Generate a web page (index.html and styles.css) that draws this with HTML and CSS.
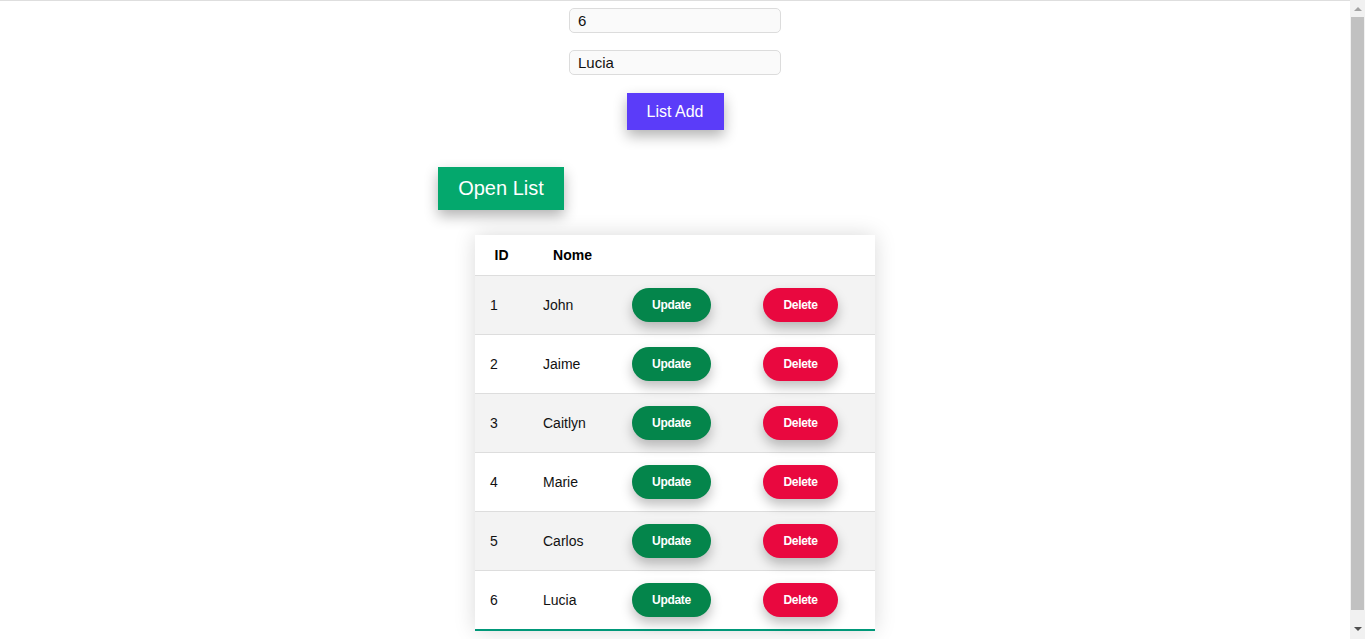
FILE: index.html
```html
<!DOCTYPE html>
<html lang="en">
<head>
<meta charset="utf-8">
<title>List</title>
<link rel="stylesheet" href="styles.css">
</head>
<body>
<div class="form">
  <input class="field" type="text" value="6">
  <input class="field" type="text" value="Lucia">
  <button class="btn-add">List Add</button>
</div>
<div class="list-wrap">
  <button class="btn-open">Open List</button>
  <table class="list">
    <thead>
      <tr><th>ID</th><th>Nome</th><th></th><th></th></tr>
    </thead>
    <tbody>
      <tr><td>1</td><td>John</td><td><button class="pill upd">Update</button></td><td><button class="pill del">Delete</button></td></tr>
      <tr><td>2</td><td>Jaime</td><td><button class="pill upd">Update</button></td><td><button class="pill del">Delete</button></td></tr>
      <tr><td>3</td><td>Caitlyn</td><td><button class="pill upd">Update</button></td><td><button class="pill del">Delete</button></td></tr>
      <tr><td>4</td><td>Marie</td><td><button class="pill upd">Update</button></td><td><button class="pill del">Delete</button></td></tr>
      <tr><td>5</td><td>Carlos</td><td><button class="pill upd">Update</button></td><td><button class="pill del">Delete</button></td></tr>
      <tr><td>6</td><td>Lucia</td><td><button class="pill upd">Update</button></td><td><button class="pill del">Delete</button></td></tr>
    </tbody>
  </table>
</div>
<div class="scrollbar" aria-hidden="true">
  <div class="sb-arrow sb-up"></div>
  <div class="sb-thumb"></div>
  <div class="sb-arrow sb-down"></div>
</div>
</body>
</html>
```
FILE: styles.css
```css
html {
  border-top: 1px solid #dedede;
}
body {
  margin: 7px 23px 8px 8px;
  font-family: "Liberation Sans", Arial, sans-serif;
  color: #111;
  background: #fff;
}
.form {
  display: flex;
  flex-direction: column;
  align-items: center;
}
.field {
  box-sizing: border-box;
  width: 212px;
  height: 25px;
  margin: 0 0 17px;
  padding: 0 8px;
  border: 1px solid #dcdcdc;
  border-radius: 5px;
  background: #fafafa;
  font-family: "Liberation Sans", Arial, sans-serif;
  font-size: 15px;
  color: #111;
}
.btn-add {
  margin-top: 1px;
  width: 97px;
  height: 37px;
  border: none;
  background: #5b3cf9;
  color: #fff;
  font-family: "Liberation Sans", Arial, sans-serif;
  font-size: 16px;
  box-shadow: 0 6px 14px rgba(0, 0, 0, 0.3);
  cursor: pointer;
}
.list-wrap {
  width: 474px;
  margin: 37px auto 16px;
  display: flex;
  flex-direction: column;
}
.btn-open {
  align-self: flex-start;
  width: 126px;
  height: 43px;
  border: none;
  background: #04a86d;
  color: #fff;
  font-family: "Liberation Sans", Arial, sans-serif;
  font-size: 20px;
  box-shadow: 0 6px 14px rgba(0, 0, 0, 0.3);
}
.list {
  align-self: center;
  margin-top: 25px;
  width: 400px;
  border-collapse: collapse;
  table-layout: fixed;
  font-size: 14px;
  box-shadow: 0 0 20px rgba(0, 0, 0, 0.15);
}
.list th:nth-child(1) { width: 53px; }
.list th:nth-child(2) { width: 89px; }
.list th:nth-child(3) { width: 131px; }
.list th:nth-child(4) { width: 127px; }
.list thead tr {
  background: #fff;
  height: 40px;
  border-bottom: 1px solid #dddddd;
}
.list th {
  font-weight: bold;
  text-align: center;
  padding: 0;
  color: #000;
}
.list tbody tr {
  height: 59px;
  border-bottom: 1px solid #dddddd;
}
.list tbody tr:nth-child(odd) {
  background: #f3f3f3;
}
.list tbody tr:last-child {
  height: 60px;
  border-bottom: 2px solid #009879;
}
.list td {
  padding: 0 15px;
  text-align: left;
  color: #111;
}
.pill {
  height: 34px;
  padding: 0;
  border: none;
  border-radius: 17px;
  color: #fff;
  font-family: "Liberation Sans", Arial, sans-serif;
  font-size: 12px;
  font-weight: bold;
  letter-spacing: -0.3px;
  box-shadow: 0 6px 12px rgba(0, 0, 0, 0.25);
}
.upd { width: 79px; background: #04854b; }
.del { width: 75px; background: #e9083f; }

.scrollbar {
  position: fixed;
  top: 0;
  right: 0;
  width: 15px;
  height: 100%;
  background: #f1f1f1;
  display: flex;
  flex-direction: column;
  align-items: center;
}
.sb-arrow {
  height: 17px;
  width: 15px;
  display: flex;
  align-items: center;
  justify-content: center;
}
.sb-up::before {
  content: "";
  border-left: 4px solid transparent;
  border-right: 4px solid transparent;
  border-bottom: 4px solid #a3a3a3;
}
.sb-down::before {
  content: "";
  border-left: 4px solid transparent;
  border-right: 4px solid transparent;
  border-top: 4px solid #505050;
}
.sb-thumb {
  flex: 1;
  width: 13px;
  margin-bottom: 10px;
  background: #c1c1c1;
}
.sb-down {
  margin-bottom: 2px;
}
```
